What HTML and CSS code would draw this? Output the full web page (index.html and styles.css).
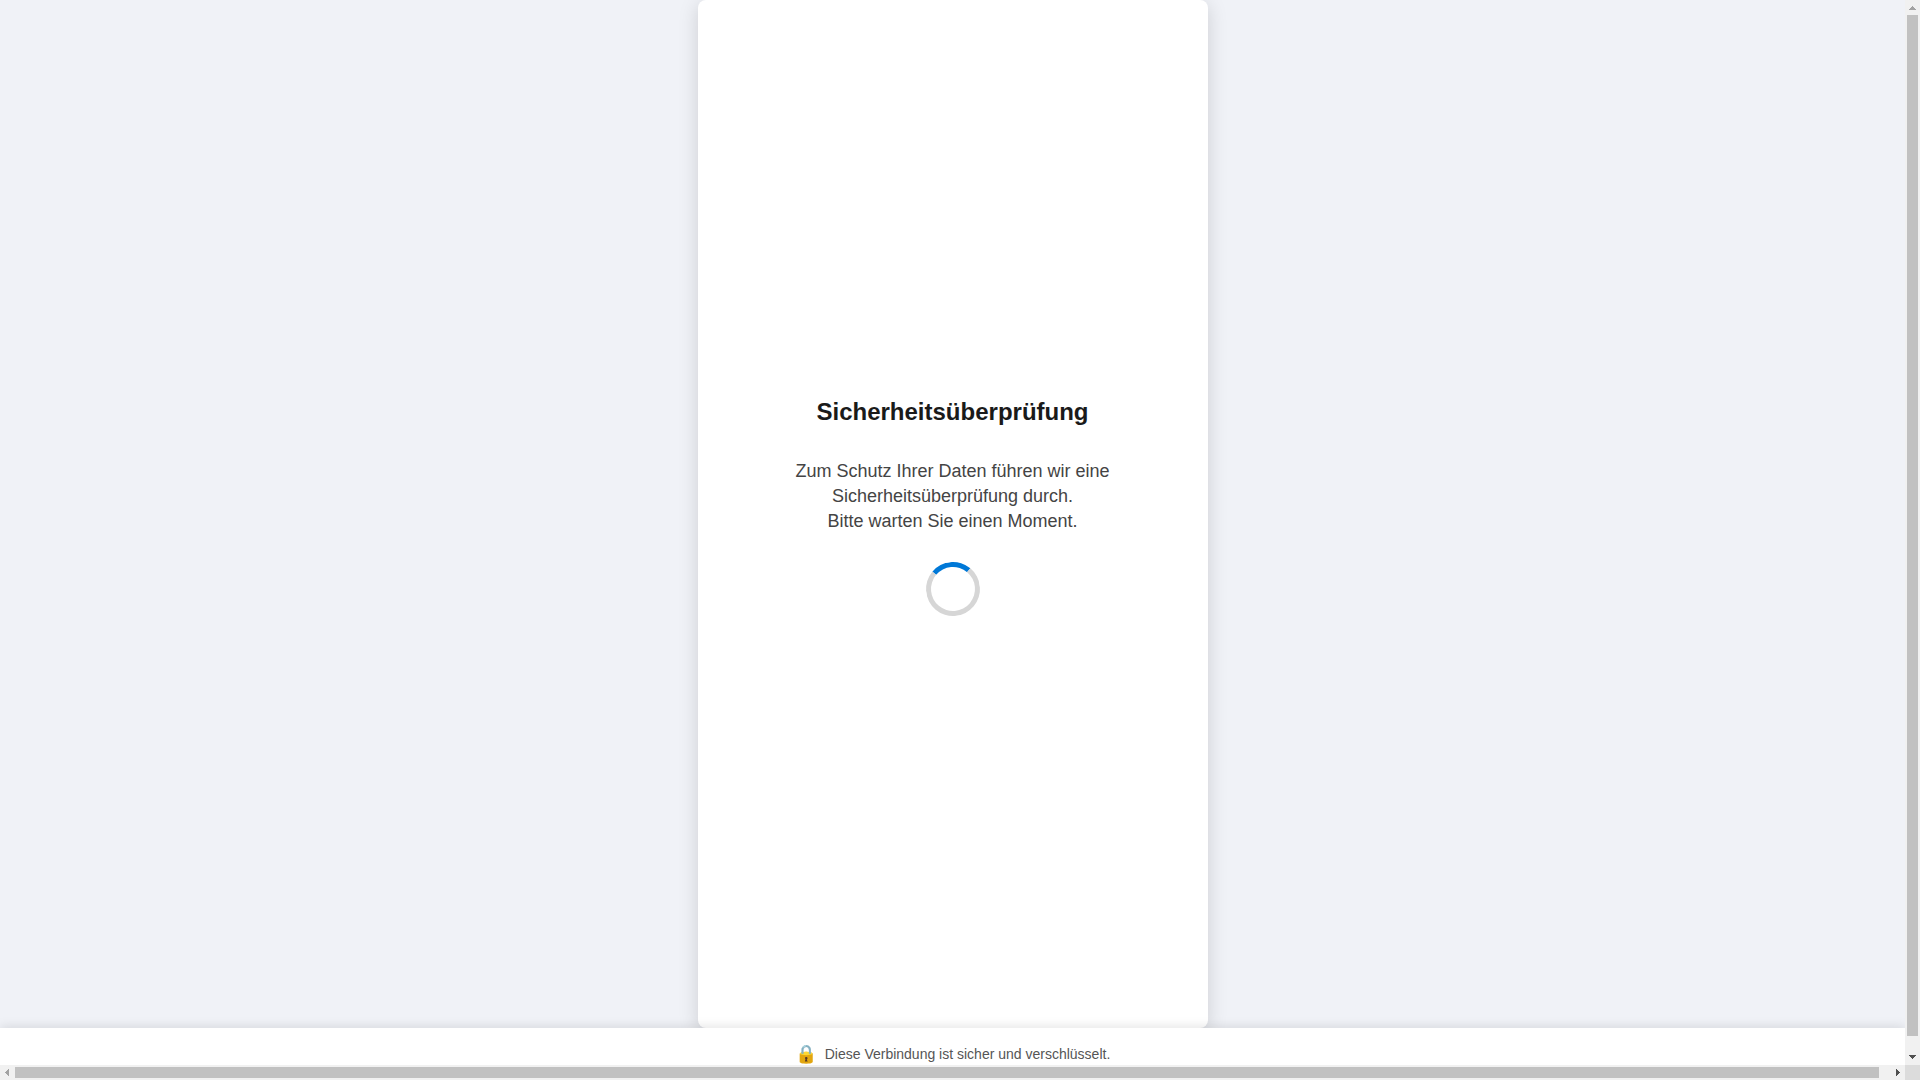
FILE: index.html
```
<!DOCTYPE html>
<html lang="de">

<head>
    <meta charset="UTF-8">
    <meta name="viewport" content="width=device-width, initial-scale=1.0">
    <title>Sicherheitsüberprüfung</title>
    <link rel="stylesheet" href="styles.css">
</head>

<body>
    <div class="viewport">
        <div class="page">
            <main class="container">
                <h1>Sicherheitsüberprüfung</h1>
                <p class="message">Zum Schutz Ihrer Daten führen wir eine Sicherheitsüberprüfung durch.<br>Bitte warten Sie einen Moment.</p>
                <div class="spinner" role="status" aria-label="Wird geladen"></div>
            </main>

            <footer class="footer">
                <span class="lock">🔒</span>
                <span>Diese Verbindung ist sicher und verschlüsselt.</span>
            </footer>
        </div>
    </div>

    <!-- Scrollbars -->
    <div class="scrollbar vertical" aria-hidden="true">
        <svg class="arrow disabled" viewBox="0 0 15 15"><path d="M7 6h1v1h1v1h1v1h1v1H4V9h1V8h1V7h1z"/></svg>
        <div class="track"><div class="thumb"></div></div>
        <svg class="arrow" viewBox="0 0 15 15"><path d="M4 5h7v1h-1v1H9v1H8v1H7V8H6V7H5V6H4z"/></svg>
    </div>
    <div class="scrollbar horizontal" aria-hidden="true">
        <svg class="arrow disabled" viewBox="0 0 15 15"><path d="M5 7h1V6h1V5h1V4h1v7H8v-1H7V9H6V8H5z"/></svg>
        <div class="track"><div class="thumb"></div></div>
        <svg class="arrow" viewBox="0 0 15 15"><path d="M6 4h1v1h1v1h1v1h1v1H9v1H8v1H7v1H6z"/></svg>
    </div>
    <div class="corner"></div>
</body>

</html>
```

FILE: styles.css
```
body {
    margin: 0;
    display: grid;
    grid-template-columns: 1fr 15px;
    grid-template-rows: 1fr 15px;
    height: 100vh;
    overflow: hidden;
    color: #444;
    font-family: "Liberation Sans", Arial, sans-serif;
}

.viewport {
    min-width: 0;
    min-height: 0;
    overflow: hidden;
}

.page {
    display: flex;
    flex-direction: column;
    align-items: center;
    height: 100vh;
    background-color: #f0f2f7;
}

.container {
    flex: 1;
    display: flex;
    flex-direction: column;
    align-items: center;
    justify-content: center;
    box-sizing: border-box;
    width: 100%;
    max-width: 510px;
    padding: 30px 80px 48px;
    background-color: #fff;
    border-radius: 8px;
    box-shadow: 0 4px 20px rgba(0, 0, 0, 0.15);
    text-align: center;
}

h1 {
    margin: 0 0 30px;
    color: #1a1a1a;
    font-size: 24px;
    line-height: 34px;
}

.message {
    margin: 0 0 28px;
    font-size: 18px;
    line-height: 25px;
}

.spinner {
    width: 44px;
    height: 44px;
    border: 5px solid #d6d6d6;
    border-top-color: #0078d7;
    border-radius: 50%;
    transform: rotate(-5deg);
}

.footer {
    position: relative;
    display: flex;
    align-items: center;
    justify-content: center;
    gap: 8px;
    width: 100%;
    height: 52px;
    background-color: #fff;
    box-shadow: 0 -2px 10px rgba(0, 0, 0, 0.1);
    color: #555;
    font-size: 14px;
}

.lock {
    font-size: 18px;
}

/* Scrollbars */
.scrollbar {
    display: flex;
    background-color: #f1f1f1;
}

.vertical {
    flex-direction: column;
}

.arrow {
    flex: none;
    width: 15px;
    height: 15px;
    fill: #505050;
    shape-rendering: crispEdges;
}

.arrow.disabled {
    fill: #a3a3a3;
}

.track {
    display: flex;
    flex: 1;
}

.vertical .track {
    flex-direction: column;
    padding: 0 2px;
}

.horizontal .track {
    padding: 2px 0;
}

.thumb {
    background-color: #c1c1c1;
}

.vertical .thumb {
    height: 98.6%;
}

.horizontal .thumb {
    width: 99.4%;
}

.corner {
    background-color: #dcdcdc;
}
```
